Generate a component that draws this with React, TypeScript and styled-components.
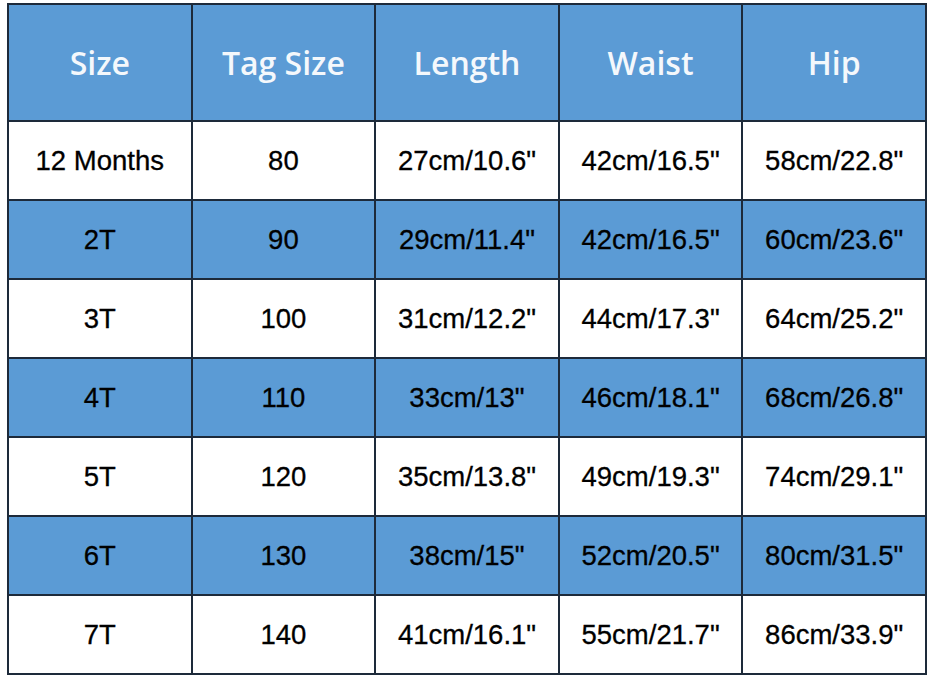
import styled, { createGlobalStyle } from 'styled-components';

const GlobalStyle = createGlobalStyle`
    body {
        margin: 0;
        background: #ffffff;
    }
`;

const Page = styled.div`
    padding: 3px 0 0 7px;
`;

const Grid = styled.div`
    display: grid;
    grid-template-columns: repeat(5, 1fr);
    grid-template-rows: 115px repeat(7, 77px);
    gap: 2px;
    padding: 2px;
    width: 916px;
    background: #1d2a3a;
`;

const HeadCell = styled.div`
    display: flex;
    align-items: center;
    justify-content: center;
    background: #5b9bd5;
    color: #f4f8fc;
    font-family: "Open Sans", "Noto Sans", sans-serif;
    font-weight: 600;
    font-size: 32px;
`;

const Cell = styled.div<{ $blue: boolean }>`
    display: flex;
    align-items: center;
    justify-content: center;
    background: ${p => (p.$blue ? '#5b9bd5' : '#ffffff')};
    color: #000000;
    font-family: "Liberation Sans", Arial, sans-serif;
    font-size: 27.5px;
    -webkit-text-stroke: 0.3px #000000;
`;

const headers = ['Size', 'Tag Size', 'Length', 'Waist', 'Hip'];

const rows = [
    ['12 Months', '80', '27cm/10.6"', '42cm/16.5"', '58cm/22.8"'],
    ['2T', '90', '29cm/11.4"', '42cm/16.5"', '60cm/23.6"'],
    ['3T', '100', '31cm/12.2"', '44cm/17.3"', '64cm/25.2"'],
    ['4T', '110', '33cm/13"', '46cm/18.1"', '68cm/26.8"'],
    ['5T', '120', '35cm/13.8"', '49cm/19.3"', '74cm/29.1"'],
    ['6T', '130', '38cm/15"', '52cm/20.5"', '80cm/31.5"'],
    ['7T', '140', '41cm/16.1"', '55cm/21.7"', '86cm/33.9"'],
];

export default function App() {
    return (
        <Page>
            <GlobalStyle />
            <Grid>
                {headers.map(h => (
                    <HeadCell key={h}>{h}</HeadCell>
                ))}
                {rows.map((row, i) =>
                    row.map((value, j) => (
                        <Cell key={`${i}-${j}`} $blue={i % 2 === 1}>
                            {value}
                        </Cell>
                    ))
                )}
            </Grid>
        </Page>
    );
}
